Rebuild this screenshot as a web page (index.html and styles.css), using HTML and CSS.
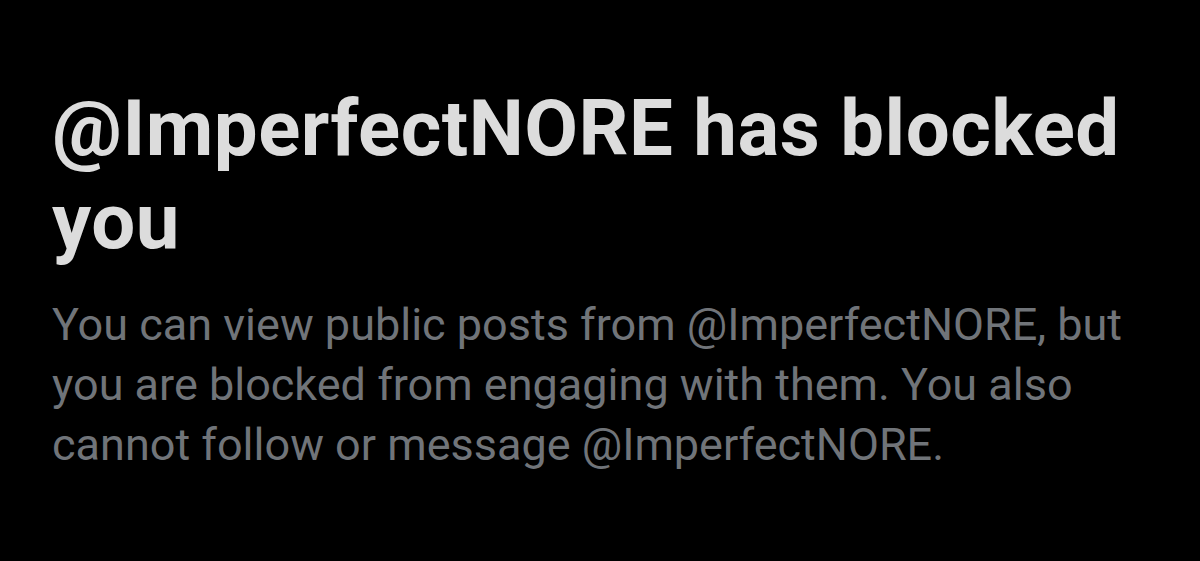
FILE: index.html
```html
<html>
	<head>
		<link rel="stylesheet" href="styles.css">
	</head>
	<body>
		<div id="page">
			<h1 class="title">@ImperfectNORE has blocked you</h1>
			<p class="notice">You can view public posts from @ImperfectNORE, but you are blocked from engaging with them. You also cannot follow or message @ImperfectNORE.</p>
		</div>
	</body>
</html>
```

FILE: styles.css
```css
body {
	margin: 0;
	padding: 0;
	background-color: #000;
	}

#page {
	width: 1200px;
	height: 561px;
	padding: 82px 0 0 52px;
	box-sizing: border-box;
	}

.title {
	margin: 0;
	width: 1100px;
	font: 700 78px/93px Roboto, sans-serif;
	letter-spacing: 0.5px;
	color: #dcdcdc;
	}

.notice {
	margin: 27px 0 0 0;
	width: 1100px;
	font: 400 45px/60px Roboto, sans-serif;
	color: #707479;
	}
```
